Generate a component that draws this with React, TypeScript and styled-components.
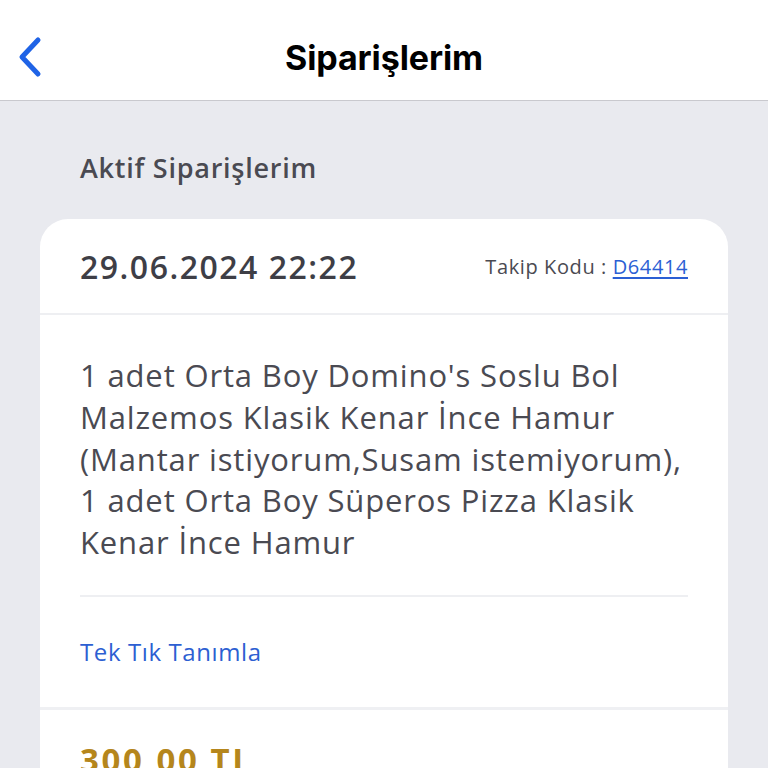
import React from "react";
import styled, { createGlobalStyle } from "styled-components";

const Global = createGlobalStyle`
  html, body { margin: 0; padding: 0; background: #e9eaef; }
  body { font-family: "Open Sans", "Noto Sans", sans-serif; -webkit-font-smoothing: antialiased; }
  * { box-sizing: border-box; }
`;

const Page = styled.div`
  width: 768px;
  height: 768px;
  overflow: hidden;
  background: #e9eaef;
  display: flex;
  flex-direction: column;
`;

const Header = styled.header`
  height: 101px;
  flex: 0 0 101px;
  background: #ffffff;
  border-bottom: 1px solid #c9c9ce;
  display: grid;
  grid-template-columns: 100px 1fr 100px;
  align-items: center;
  padding-top: 14px;
`;

const BackButton = styled.button`
  border: 0;
  background: none;
  padding: 0 0 0 16px;
  display: flex;
  align-items: center;
  cursor: pointer;
`;

const Title = styled.h1`
  margin: 0;
  text-align: center;
  font-family: "Inter", "Liberation Sans", sans-serif;
  font-weight: 700;
  font-size: 34px;
  letter-spacing: -0.1px;
  color: #000;
`;

const Content = styled.main`
  padding: 50px 40px 0;
  display: flex;
  flex-direction: column;
`;

const SectionTitle = styled.h2`
  margin: 0 0 34px 40px;
  font-size: 27px;
  line-height: 34px;
  font-weight: 600;
  letter-spacing: 0.75px;
  color: #4a4a52;
`;

const Card = styled.section`
  background: #fff;
  border-radius: 28px 28px 0 0;
  display: flex;
  flex-direction: column;
`;

const CardHeader = styled.div`
  height: 96px;
  padding: 0 40px;
  display: flex;
  align-items: center;
  justify-content: space-between;
  border-bottom: 2px solid #eeeff2;
`;

const DateText = styled.span`
  font-size: 32px;
  font-weight: 600;
  letter-spacing: 1.5px;
  color: #3e3e46;
`;

const Tracking = styled.span`
  font-size: 20px;
  letter-spacing: 0.6px;
  color: #4a4a52;
`;

const TrackingCode = styled.a`
  color: #2b5fd4;
  text-decoration: underline;
  text-underline-offset: 3px;
`;

const Body = styled.div`
  padding: 0 40px;
`;

const Description = styled.div`
  padding: 40px 0 31px;
  border-bottom: 2px solid #eeeff2;
  font-size: 31px;
  line-height: 41.75px;
  letter-spacing: 0.85px;
  color: #4a4a52;
`;

const Item = styled.span`
  display: block;
`;

const ActionRow = styled.div`
  height: 110px;
  display: flex;
  align-items: center;
`;

const ActionLink = styled.a`
  font-size: 24px;
  letter-spacing: 0.6px;
  color: #2d5fd2;
  text-decoration: none;
`;

const PriceSection = styled.div`
  border-top: 3px solid #eff0f3;
  padding: 27px 40px;
`;

const Price = styled.span`
  font-size: 33px;
  font-weight: 700;
  letter-spacing: 2.6px;
  color: #b5861c;
`;

export default function App() {
  return (
    <Page>
      <Global />
      <Header>
        <BackButton aria-label="Geri">
          <svg width="28" height="42" viewBox="0 0 28 42">
            <path d="M22 4 L6 21 L22 38" fill="none" stroke="#1f63e6" strokeWidth="5" strokeLinecap="round" strokeLinejoin="round" />
          </svg>
        </BackButton>
        <Title>Siparişlerim</Title>
        <div />
      </Header>
      <Content>
        <SectionTitle>Aktif Siparişlerim</SectionTitle>
        <Card>
          <CardHeader>
            <DateText>29.06.2024 22:22</DateText>
            <Tracking>
              Takip Kodu : <TrackingCode>D64414</TrackingCode>
            </Tracking>
          </CardHeader>
          <Body>
            <Description>
              <Item>1 adet Orta Boy Domino's Soslu Bol Malzemos Klasik Kenar İnce Hamur (Mantar istiyorum,Susam istemiyorum),</Item>
              <Item>1 adet Orta Boy Süperos Pizza Klasik Kenar İnce Hamur</Item>
            </Description>
            <ActionRow>
              <ActionLink>Tek Tık Tanımla</ActionLink>
            </ActionRow>
          </Body>
          <PriceSection>
            <Price>300,00 TL</Price>
          </PriceSection>
        </Card>
      </Content>
    </Page>
  );
}
